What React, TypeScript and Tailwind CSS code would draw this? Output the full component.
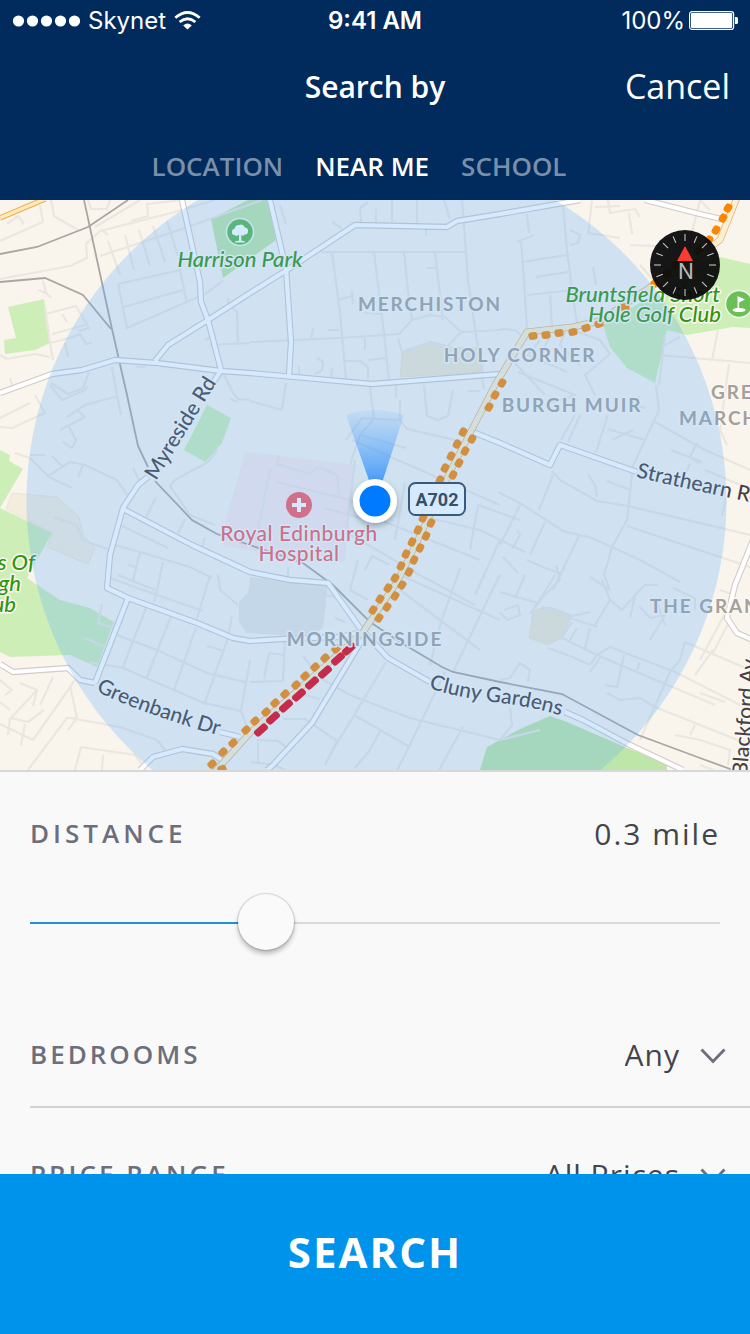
import { useState, type CSSProperties } from 'react';

const minorStreets = [
  // north-west
  'M0 241L43 222L40 205M7 224L18 216L24 224M51 200L54 216L78 230M88 200L91 209L107 209L110 200M95 227L105 221L140 200M101 229L108 235M131 221L148 216L147 204L182 200',
  'M0 279L70 266L87 258L86 244L100 231L175 212L215 200',
  'M100 256L185 228L262 200M108 241L120 275M125 235L134 270M139 230L150 266M153 226L165 262M167 221L178 256',
  'M118 284L180 270L187 303M118 284L127 328L205 294L223 281M124 307L183 290',
  'M43 281L46 293L38 290M44 291L51 298M45 307L50 343L53 360M46 314L76 306L89 328L78 331M62 314L67 322M52 334L85 325M50 343L70 338L80 334L86 344L92 343M65 343L68 357M0 355L7 359L35 354L50 357M10 378L13 388',
  'M228 298L229 305L237 312L238 344M205 340L210 338M210 345L250 343M136 367L145 367M89 372L83 388L68 394L51 383M112 367L117 395L121 415M224 375L233 393L238 399L250 400',
  // north
  'M280 205L286 224M361 222L360 208L368 202M376 209L376 222M392 200L392 222M417 200L417 224M426 229L426 236M332 222L342 228M444 200L450 219M462 200L468 280L484 390',
  'M321 252L467 252M332 252L340 313L346 380M374 252L383 325L389 380M404 252L409 300L412 320M435 252L443 320M427 268L436 268M338 300L352 296M352 291L353 304M364 313L381 314M328 330L339 330M313 328L311 340M365 338L365 350',
  'M250 342L340 338L399 334L412 320L430 315L445 317L461 332L500 330L502 330M461 332L448 346L430 342L402 352L398 338M344 361L360 361L368 367L368 380M368 360L386 358M317 358L323 362L322 370L315 374M299 366L299 375M332 368L331 378',
  'M286 383L282 410L250 401M370 387L374 419L360 435L350 465M396 384L396 398M424 385L427 416L438 420L448 416L453 390M468 391L480 391',
  // north-east
  'M527 214L529 233M517 242L534 235M521 240L524 280L527 330M563 205L567 250L572 290L578 330M522 262L567 255M536 277L568 272M527 295L575 290M550 295L552 327M570 230L580 235L578 243L570 245M592 200L590 218L588 233L620 238M608 200L610 213L635 209L640 217M629 213L632 234M595 207L620 206M630 245L655 246M593 267L596 285M540 340L528 355L567 372M550 335L543 350M565 332L560 345L580 365M578 332L600 340L610 354L585 375L595 395M640 265L655 282M665 335L663 350L659 385M500 329L515 330L527 340M512 360L545 395M518 372L575 395L545 405M660 355L750 363M718 330L712 360M665 345L680 337M729 364L720 430L727 445M690 240L700 200L710 210',
  'M656 385L659 410L651 427L633 466L627 520L612 547L604 575L610 590M575 415L561 440M580 415L568 442M608 415L596 452M608 429L645 440M633 430L612 440M645 408L632 404L640 396M655 422L705 450L750 470M671 450L702 462M697 443L690 457L700 463M690 464L686 473M705 470L750 489M726 498L722 516',
  'M552 471L560 480L597 501L628 506L750 535M553 475L539 510M588 474L595 485L597 497M607 481L630 490M498 492L520 503L563 531L592 538L640 560L680 582M627 526L750 567M579 536L553 590M545 522L530 555M520 505L500 545M517 530L520 535L512 549M527 560L545 568L562 574M503 557L518 573M556 565L560 580L540 600L530 614',
  // west
  'M35 395L45 413L12 428L0 427M0 418L30 403M50 385L62 400L85 390L88 386M67 417L85 405L118 396M60 430L85 417L77 410M68 425L76 440L72 448L63 442M15 453L30 458L48 476L70 462L85 465L117 480L127 495M52 456L62 466M30 455L45 455M47 476L72 488M83 465L78 477M133 468L139 480M156 497L146 517',
  'M230 399L238 402M217 450L208 462L175 480L170 486L190 515L215 525M185 519L178 533M205 537L202 547M120 525L168 548M115 545L140 552L190 567L212 578M140 552L133 580M128 565L136 567M163 562L157 590M118 575L155 590M54 517L77 525L82 540L110 550',
  'M110 578L157 595L203 611M157 590L154 602M210 575L196 622M146 608L123 667M171 616L147 677M196 628L174 690M228 638L204 705M117 635L157 650L207 673L245 682M95 663L123 668L174 690L204 703L241 711L250 735M241 711L250 660M207 646L224 651M232 615L228 638M102 604L98 623L114 628M84 638L104 646M90 662L100 665M218 575L220 590L238 605',
  // south-west
  'M0 680L12 690L5 695M75 680L33 740L0 724M20 683L37 690L33 706M37 690L11 718L28 722L44 710M0 702L10 710M53 677L40 705M10 718L8 735M25 724L21 745M70 685L77 718L67 718L28 770M70 718L120 727L157 740L165 750M75 770L81 747L135 755L145 768M103 755L102 770M77 718L68 730',
  'M250 682L283 681L285 640M264 679L269 653L285 655M303 656L320 678L350 695L410 718L500 740M386 662L365 697L330 755M445 672L405 755L397 770M440 625L430 665M305 695L320 699M283 719L305 719L337 741L325 765M354 715L408 746M380 731L370 750L355 768M257 740L278 741L290 750M258 742L258 763M463 727L439 770M250 762L275 765L285 770M453 672L490 595L500 575',
  // centre
  'M279 455L277 464L310 474L318 467L337 475L339 495M270 470L256 540M277 482L350 500L380 520L480 560M355 460L347 530M323 508L370 520M346 440L362 418L400 420L407 429L455 440M360 435L406 448M352 440L500 505M400 400L400 420M342 530L420 575L475 605M365 570L372 556L390 565M405 483L395 540M417 515L480 530L525 552M470 550L478 505L520 520M460 568L440 625M288 567L288 578M358 560L350 590L368 600M400 590L480 650M400 575L500 620M325 595L335 597L350 610M335 618L345 622M475 595L500 540',
  // south-east
  'M500 592L538 603L555 575M515 598L525 575M504 610L518 605L520 615L507 620L500 612M542 607L572 616L590 612M572 622L560 640M567 617L598 627M577 628L570 640M590 628L585 648M562 638L597 655L625 667L715 705M548 648L570 656L590 665M590 665L597 655L610 647L675 672L750 710M624 655L617 687L605 685M600 658L590 672M640 662L637 670M595 625L610 600L602 580M610 600L622 610L635 595L645 585L658 585M635 595L630 618M658 605L665 625M640 607L650 618L665 615L650 640M685 642L680 660L670 672L640 740M685 642L750 670M713 650L695 675M607 693L620 700L640 698L655 707L750 745M690 735L695 725M675 735L700 740L730 750L728 765M500 680L510 678L520 663L530 670L528 682M510 708L512 725L500 740L540 730M700 693L725 702M730 620L712 655M720 590L735 595L700 660M590 577L610 590M673 588L695 598L695 610M700 765L740 780',
];

const mainRoads = [
  'M182 200L200 282L201 302L208 320L221 370L213 383M148 477L138 485L123 508L110 555L107 588L128 598L95 683',
  'M0 393L52 374L82 370L115 360L157 363L221 371L250 373L372 384L500 374',
  'M155 361L168 345L208 320L250 293L287 270L355 225L447 227L457 221L500 214L563 203L580 200',
  'M270 200L282 252L286 268L291 342L289 375',
  'M645 200L700 214L730 221',
  'M123 509L192 545L250 572L290 580L328 583L360 628L388 658L430 682M565 712L583 720L630 745L683 770',
  'M128 598L197 623L233 638L250 641L283 639L340 637L362 632',
  'M0 664L13 672L68 668L80 680L95 683M220 732L240 737',
  'M140 770L153 757L182 749L213 754L222 760',
  'M362 640L312 723L273 765L267 770',
  'M473 432L500 443L550 465L560 445L637 472',
  'M755 535L735 585L727 618L737 633L755 641',
];

const trunkRoad =
  'M212 775L250 733L363 632L397 582L417 542L450 472L495 385L527 332L573 327L600 321L643 292L690 262L720 240L738 195';

const railways = [
  'M0 254L37 247L88 227L128 200',
  'M0 282L45 278L83 295L111 329',
  'M84 200L112 329L127 395L138 446L148 467M155 481L192 520L217 534L303 563L333 585L370 622L400 642L442 667L453 672L500 682L562 694L638 735L700 758L733 770',
];

// x, y and heading of each slow-traffic marker
const slowTraffic: [number, number, number][] = [
  [463, 432, -62], [457, 444, -62], [451, 456, -62], [445, 468, -62], [440, 480, -62], [434, 492, -62],
  [423, 518, -65], [418, 530, -65], [412, 542, -65], [406, 554, -65], [401, 566, -65], [395, 578, -60],
  [388, 588, -57], [380, 599, -57], [373, 610, -57],
  [472, 439, -62], [465, 451, -62], [459, 463, -62], [453, 475, -62], [431, 523, -65], [426, 536, -65],
  [420, 548, -65], [414, 560, -65], [409, 572, -62], [402, 585, -57], [395, 596, -57], [387, 607, -57], [379, 618, -57],
  [502, 383, -60], [495, 395, -60], [489, 407, -60],
  [533, 336, -8], [546, 335, -8], [559, 333, -8], [573, 332, -10], [586, 328, -16], [599, 324, -16],
  [625, 307, -15], [655, 283, -40], [667, 274, -35], [676, 265, -35], [686, 257, -35], [699, 250, -40],
  [709, 240, -60], [716, 230, -60], [723, 218, -60], [728, 208, -60],
  [336, 649, -42], [325, 658, -42], [315, 667, -42], [305, 676, -42], [296, 685, -42], [285, 694, -42],
  [275, 703, -42], [266, 712, -42], [255, 721, -42], [246, 730, -42], [233, 743, -42], [223, 752, -42],
  [212, 764, -42], [222, 769, -20],
];

const stoppedTraffic: [number, number][] = [
  [349, 649], [338, 659], [325, 672], [312, 683], [299, 695], [286, 706], [273, 718], [261, 730],
];

const compassTicks = Array.from({ length: 16 }, (_, i) => i * 22.5);

const halo = 'stroke-[#fbf8f2] stroke-3 [paint-order:stroke] [stroke-linejoin:round]';
const place = `fill-[#a5a09c] text-[19px] font-bold tracking-widest ${halo}`;
const park = `fill-[#30940f] text-[22px] font-medium italic ${halo}`;
const road = `fill-[#474144] text-[21px] font-medium ${halo}`;

function CityMap() {
  return (
    <svg
      viewBox="0 200 750 570"
      preserveAspectRatio="xMidYMid slice"
      className="block h-full w-full bg-[#f9f5ed] font-[Lato,sans-serif]"
      role="img"
      aria-label="Map of Morningside"
    >
      <defs>
        <linearGradient id="beam" x1="0" y1="0" x2="0" y2="1">
          <stop offset="0" stopColor="#5aa8fa" stopOpacity="0.1" />
          <stop offset="1" stopColor="#2f8ffb" stopOpacity="0.9" />
        </linearGradient>
        <filter id="dotShadow" x="-50%" y="-50%" width="200%" height="200%">
          <feDropShadow dx="0" dy="3" stdDeviation="3" floodColor="#000" floodOpacity="0.3" />
        </filter>
        <path id="myreside" d="M156 481L217 382" />
        <path id="greenbank" d="M96 691Q140 713 224 737" />
        <path id="cluny" d="M429 688Q450 696 500 703Q530 706 570 718" />
        <path id="strathearn" d="M636 477Q690 490 780 508" />
        <path id="blackford" d="M747 776L757 650" />
      </defs>

      <g fill="#ceeeb7">
        <path d="M8 307L44 299L50 343L35 350L5 354L4 340L16 338Z" />
        <path d="M720 257L750 264V328L733 327L687 335L667 330L655 383L627 368L610 347L603 325L653 295Z" />
        <path d="M207 405L231 418L222 443L205 462L184 450Z" />
        <path d="M0 450L10 455L9 461L23 469L0 508L52 533L27 578L33 582L60 600L90 608L114 622L97 667L70 655L10 657L0 652Z" />
      </g>
      <g fill="#bee6a8">
        <path d="M211 219L248 200H267L276 240L223 278Z" />
        <path d="M480 770L487 747L520 729L550 716L567 722L625 747L667 765V770Z" />
      </g>
      <g fill="#f4ecdc" stroke="#eadfcd" strokeWidth="0.7">
        <path d="M12 493L57 497L79 517L83 535L95 548L88 564L73 558L47 547L52 533L6 509Z" />
        <path d="M533 610L550 607L572 615L562 638L548 645L529 638Z" fill="#f2e8d2" />
        <path d="M402 352L430 342L450 347L480 348L483 372L400 377Z" fill="#f2e8d2" />
      </g>
      <path d="M245 452L280 456L356 465L350 500L345 562L310 562L222 545L225 523Z" fill="#f9e9e7" />
      <path d="M250 577L328 584L323 628L310 637L246 633L239 622V602L248 592Z" fill="#e9e6e1" />

      <g fill="none" stroke="#eae6e0" strokeWidth="2.2" strokeLinejoin="round">
        {minorStreets.map((d) => (
          <path key={d} d={d} />
        ))}
      </g>

      <g fill="none" stroke="#a9a6a4" strokeWidth="1.8">
        {railways.map((d) => (
          <path key={d} d={d} />
        ))}
      </g>

      <g fill="none" strokeLinejoin="round">
        <g stroke="#d2cbc6" strokeWidth="6.4">
          {mainRoads.map((d) => (
            <path key={d} d={d} />
          ))}
        </g>
        <g stroke="#ffffff" strokeWidth="4.2">
          {mainRoads.map((d) => (
            <path key={d} d={d} />
          ))}
        </g>
        <path d="M0 218L45 199" stroke="#f3a84c" strokeWidth="5.5" />
        <path d="M0 218L45 199" stroke="#fdecb9" strokeWidth="3.5" />
        <path d={trunkRoad} stroke="#e3b380" strokeWidth="7" />
        <path d={trunkRoad} stroke="#fbf1d0" strokeWidth="5.4" />
      </g>

      <g fill="#fc8600">
        {slowTraffic.map(([x, y, a]) => (
          <rect key={`${x}-${y}`} x={x - 4.5} y={y - 3.7} width="9" height="7.4" rx="2.8" transform={`rotate(${a} ${x} ${y})`} />
        ))}
      </g>
      <g fill="#ed0010">
        {stoppedTraffic.map(([x, y]) => (
          <rect key={x} x={x - 7.5} y={y - 3.7} width="15" height="7.4" rx="2.6" transform={`rotate(-42 ${x} ${y})`} />
        ))}
      </g>

      <g>
        <circle cx="240" cy="232" r="13.5" fill="#5db750" stroke="#eef8ea" strokeWidth="1.5" />
        <path
          d="M239 240.5V234.5Q236.500 237 234.500 235Q231.500 235 232 231.800Q232 229 234.500 229Q235 225 239 225Q243 223.500 245 227.500Q248.500 228 248 231.500Q247.800 235 244.500 234.500Q243 237 241.300 234.500V240.500L245 241.500V242.500H235V241.500Z"
          fill="#fff"
        />
        <circle cx="299" cy="505" r="13" fill="#f85c64" />
        <path d="M297 498H301V503H306V507H301V512H297V507H292V503H297Z" fill="#fff" />
        <circle cx="739" cy="304" r="13.5" fill="#6cbf57" stroke="#eef8ea" strokeWidth="1.5" />
        <path d="M737.500 308V296L745 299.500L739.200 302.500V308Q746 308.500 745.500 310Q745 312 739 312Q733 312 732.500 310Q733 308.500 737.500 308Z" fill="#fff" />
      </g>

      <text x="240" y="267" textAnchor="middle" className={park}>Harrison Park</text>
      <text x="720" y="302" textAnchor="end" className={park}>Bruntsfield Short</text>
      <text x="721" y="322" textAnchor="end" className={park}>Hole Golf Club</text>
      <text x="35" y="570" textAnchor="end" className={park}>s Of</text>
      <text x="21" y="591" textAnchor="end" className={park}>gh</text>
      <text x="16" y="612" textAnchor="end" className={park}>ub</text>

      <text x="430" y="311" textAnchor="middle" className={place}>MERCHISTON</text>
      <text x="520" y="362" textAnchor="middle" className={place}>HOLY CORNER</text>
      <text x="572" y="412" textAnchor="middle" className={place}>BURGH MUIR</text>
      <text x="711" y="399" className={place}>GREEN</text>
      <text x="679" y="425" className={place}>MARCHMONT</text>
      <text x="650" y="613" className={place}>THE GRANGE</text>
      <text x="365" y="646" textAnchor="middle" className={place}>MORNINGSIDE</text>

      <g className={`fill-[#f45c65] text-[21px] font-medium tracking-wide ${halo}`} textAnchor="middle">
        <text x="299" y="541">Royal Edinburgh</text>
        <text x="299" y="561">Hospital</text>
      </g>

      <text className={road}><textPath href="#myreside">Myreside Rd</textPath></text>
      <text className={road}><textPath href="#greenbank">Greenbank Dr</textPath></text>
      <text className={road}><textPath href="#cluny">Cluny Gardens</textPath></text>
      <text className={road}><textPath href="#strathearn">Strathearn Rd</textPath></text>
      <text className={road}><textPath href="#blackford">Blackford Av</textPath></text>

      <rect x="409" y="483" width="56" height="32" rx="6.5" fill="#fff" stroke="#2f3f55" strokeWidth="2" />
      <text x="437" y="506" textAnchor="middle" className="fill-[#2b3238] font-[Roboto,sans-serif] text-[18px] font-bold">
        A702
      </text>

      <circle cx="376.500" cy="501" r="350" fill="#59adff" fillOpacity="0.25" />

      <path d="M346 415Q375 405 404 415L381 486H371Z" fill="url(#beam)" />
      <circle cx="375" cy="501" r="22" fill="#fff" filter="url(#dotShadow)" />
      <circle cx="375" cy="501" r="15.5" fill="#007aff" />

      <circle cx="685" cy="265" r="35" fill="#0a0a0b" fillOpacity="0.95" />
      <g stroke="#c4c4c4" strokeWidth="1.1">
        {compassTicks.map((a) => (
          <path key={a} d="M685 234V241" transform={`rotate(${a} 685 265)`} />
        ))}
      </g>
      <path d="M685 246L693 261H677Z" fill="#ff3b30" />
      <text x="686" y="279" textAnchor="middle" className="fill-[#b9b9b9] font-[Inter,sans-serif] text-[21px]">N</text>
    </svg>
  );
}

function StatusBar() {
  return (
    <div className="grid h-10 grid-cols-3 items-center px-3 pt-px font-[Inter,sans-serif] text-2xl leading-none">
      <div className="flex items-center gap-2">
        <svg width="68" height="12" viewBox="0 0 68 12" fill="#fff" aria-hidden="true">
          {[6, 20, 34, 48, 62].map((x) => (
            <circle key={x} cx={x + 0.5} cy="6" r="5.6" />
          ))}
        </svg>
        <span>Skynet</span>
        <svg width="27" height="19" viewBox="0 0 27 19" fill="none" stroke="#fff" strokeWidth="2.8" aria-hidden="true">
          <path d="M1.300 6.700Q13.500 -3.700 25.700 6.700" />
          <path d="M5.600 11Q13.500 4.400 21.400 11" />
          <path d="M13.500 18.500L9.200 14.400Q13.500 10.600 17.800 14.400Z" fill="#fff" stroke="none" />
        </svg>
      </div>
      <div className="text-center font-semibold">9:41 AM</div>
      <div className="flex items-center justify-end gap-1">
        <span>100%</span>
        <svg width="49" height="19" viewBox="0 0 49 19" aria-hidden="true">
          <rect x="0.600" y="0.600" width="44" height="17.800" rx="2.5" fill="none" stroke="#fff" strokeWidth="1.2" />
          <rect x="2" y="2" width="41.200" height="15" rx="1" fill="#fff" />
          <path d="M46 6H47.500Q49 6 49 7.500V11.500Q49 13 47.500 13H46Z" fill="#fff" />
        </svg>
      </div>
    </div>
  );
}

function SelectRow({ id, label, options }: { id: string; label: string; options: string[] }) {
  return (
    <div className="ml-[30px] flex h-[120px] items-center justify-between border-b-2 border-[#d3d3d3] pt-3.5 pr-6">
      <label htmlFor={id} className="text-[26px] font-semibold tracking-[3px] text-[#6c6e7d]">
        {label}
      </label>
      <div className="flex items-center gap-5">
        <select id={id} className="field-sizing-content appearance-none bg-transparent text-[30px] tracking-[1px] text-[#44444b] outline-none">
          {options.map((o) => (
            <option key={o}>{o}</option>
          ))}
        </select>
        <svg width="26" height="16" viewBox="0 0 26 16" fill="none" stroke="#6c6e7d" strokeWidth="2.8" className="pointer-events-none mt-1" aria-hidden="true">
          <path d="M1.500 1.500L13 13.500L24.500 1.500" />
        </svg>
      </div>
    </div>
  );
}

const tabs = ['LOCATION', 'NEAR ME', 'SCHOOL'];

export default function App() {
  const [tab, setTab] = useState('NEAR ME');
  const [distance, setDistance] = useState(0.328);
  const fill = { '--fill': `calc(28px + (100% - 56px) * ${distance})` } as CSSProperties;

  return (
    <div className="flex h-screen flex-col overflow-hidden bg-[#f9f9f9] font-['Open_Sans',sans-serif]">
      <header className="shrink-0 bg-[#002b5c] text-white">
        <StatusBar />
        <div className="grid h-[92px] grid-cols-3 items-center px-5">
          <h1 className="col-start-2 text-center text-[30px] font-semibold">Search by</h1>
          <button type="button" className="justify-self-end text-[34px]">Cancel</button>
        </div>
        <nav className="flex h-[68px] items-center justify-center gap-8 pr-8 text-[26px] font-semibold">
          {tabs.map((t) => (
            <button
              key={t}
              type="button"
              aria-pressed={t === tab}
              onClick={() => setTab(t)}
              className={t === tab ? 'text-white' : 'text-[#7890aa]'}
            >
              {t}
            </button>
          ))}
        </nav>
      </header>

      <main className="min-h-0 flex-1 overflow-y-auto [scrollbar-width:none]">
        <div className="h-[572px] border-b-2 border-[#d8d8d8]">
          <CityMap />
        </div>

        <section className="flex h-[216px] flex-col px-[30px] pt-[39px]">
          <div className="flex items-center justify-between">
            <label htmlFor="distance" className="text-[26px] font-semibold tracking-[4px] text-[#6c6e7d]">
              DISTANCE
            </label>
            <output htmlFor="distance" className="text-[30px] tracking-[2px] text-[#44444b]">
              {distance.toFixed(1)} mile
            </output>
          </div>
          <input
            id="distance"
            type="range"
            min="0"
            max="1"
            step="0.001"
            value={distance}
            onChange={(e) => setDistance(Number(e.target.value))}
            style={fill}
            className="mt-[39px] h-14 w-full appearance-none bg-transparent outline-none [&::-webkit-slider-runnable-track]:h-0.5 [&::-webkit-slider-runnable-track]:bg-[linear-gradient(to_right,#1b95d8_var(--fill),#dadada_var(--fill))] [&::-webkit-slider-thumb]:-mt-7 [&::-webkit-slider-thumb]:size-14 [&::-webkit-slider-thumb]:appearance-none [&::-webkit-slider-thumb]:rounded-full [&::-webkit-slider-thumb]:bg-[#fafafa] [&::-webkit-slider-thumb]:shadow-[0_0_1px_1px_rgba(0,0,0,0.14),0_4px_5px_rgba(0,0,0,0.25)]"
          />
        </section>

        <SelectRow id="bedrooms" label="BEDROOMS" options={['Any', '1', '2', '3', '4+']} />
        <SelectRow id="price" label="PRICE RANGE" options={['All Prices', 'Under £200k', 'Over £200k']} />
      </main>

      <button type="button" className="h-40 shrink-0 bg-[#0093eb] pb-1.5 text-[42px] font-bold tracking-[2px] text-white">
        SEARCH
      </button>
    </div>
  );
}
